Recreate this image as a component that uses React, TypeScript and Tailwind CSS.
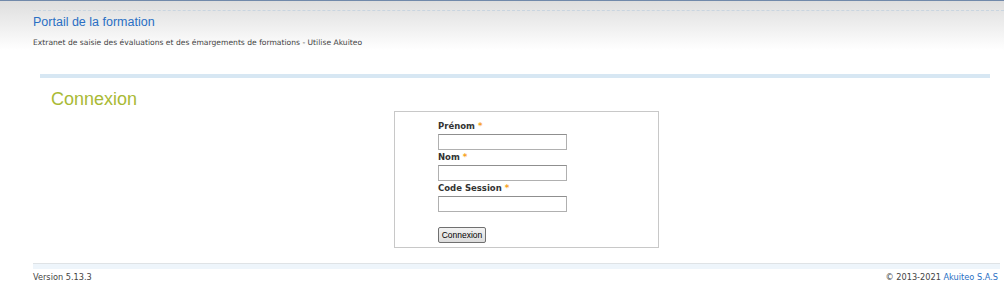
import React from "react";

function Field({ label }: { label: string }) {
  return (
    <div className="flex flex-col">
      <label className="text-[8.5px] font-bold text-[#333] leading-[14px] h-[14px]">
        {label} <span className="text-[#f7a21b]">*</span>
      </label>
      <input
        type="text"
        className="mt-[1px] w-[129px] h-[16px] border border-[#b0b0b0] border-t-[#8f8f8f] bg-white outline-none"
      />
    </div>
  );
}

export default function App() {
  return (
    <div className="w-[1004px] h-[287px] bg-white overflow-hidden font-['DejaVu_Sans',sans-serif] text-[#333]">
      <header className="h-[50px] border-t border-[#7189aa] bg-gradient-to-b from-[#dedede] to-white pl-[33px]">
        <div className="mt-[9px] border-t border-dashed border-[#c9d5e0]" />
        <h1 className="mt-[3px] text-[12.5px] leading-[16px] text-[#2a6fc4] font-['Liberation_Sans',sans-serif] font-normal">
          Portail de la formation
        </h1>
        <p className="mt-[8px] text-[7.6px] leading-[10px] text-[#444]">
          Extranet de saisie des évaluations et des émargements de formations - Utilise Akuiteo
        </p>
      </header>
      <div className="mt-[24px] ml-[40px] mr-[14px] h-[4px] bg-[#d7e7f3]" />
      <h2 className="mt-[10px] ml-[51px] text-[18px] leading-[22px] text-[#a9ba35] font-['Liberation_Sans',sans-serif]">
        Connexion
      </h2>
      <div className="pl-[394px] mt-[1px]">
        <form className="w-[265px] h-[137px] border border-[#c8c8c8] pl-[43px] pt-[7px]">
          <div className="flex flex-col">
            <Field label="Prénom" />
            <Field label="Nom" />
            <Field label="Code Session" />
          </div>
          <button
            type="button"
            className="mt-[15px] h-[16px] w-[48px] border border-[#707070] rounded-[2px] bg-gradient-to-b from-[#f2f2f2] to-[#dcdcdc] text-[8.5px] leading-[14px] text-black font-['Liberation_Sans',sans-serif]"
          >
            Connexion
          </button>
        </form>
      </div>
      <footer className="mt-[15px] ml-[33px] mr-[4px] border-t border-[#dfe3e6] bg-[#eef5fb] h-[6px]" />
      <div className="mt-[2px] ml-[33px] mr-[6px] flex justify-between text-[8.2px] leading-[12px] text-[#444]">
        <span>Version 5.13.3</span>
        <span>
          © 2013-2021 <span className="text-[#2a6fc4]">Akuiteo S.A.S</span>
        </span>
      </div>
    </div>
  );
}
